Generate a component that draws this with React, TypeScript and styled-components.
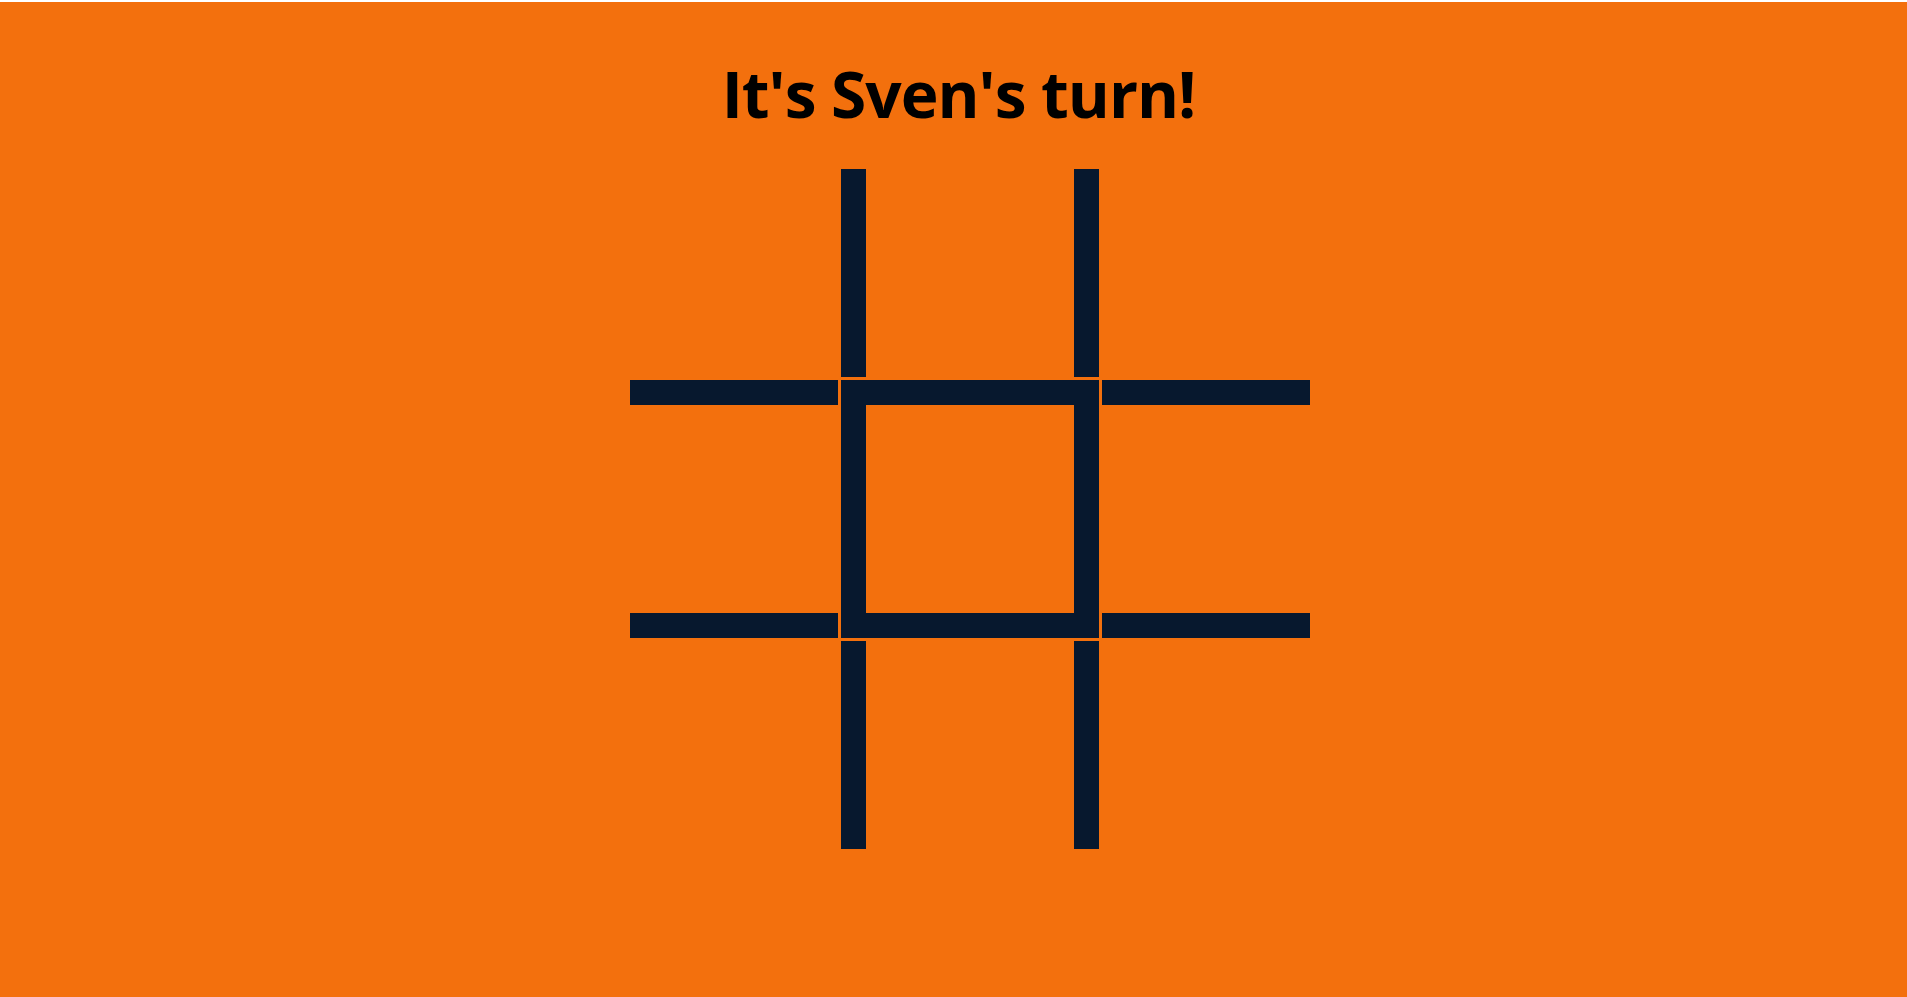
import React from "react";
import styled, { createGlobalStyle } from "styled-components";

const Global = createGlobalStyle`
  html, body { margin: 0; padding: 0; background: #ffffff; }
  body { font-family: "Open Sans", sans-serif; }
`;

const Page = styled.main`
  margin-top: 2px;
  min-height: 995px;
  box-sizing: border-box;
  background: #f3700d;
  display: flex;
  flex-direction: column;
  align-items: center;
  padding-top: 52px;
`;

const Title = styled.h1`
  margin: 0;
  font-family: "Open Sans", sans-serif;
  font-weight: 700;
  font-size: 64px;
  line-height: 80px;
  letter-spacing: -1px;
  color: #000000;
  padding-left: 10px;
`;

const Board = styled.div`
  margin-top: 35px;
  margin-left: 33px;
  display: grid;
  grid-template-columns: repeat(3, auto);
  gap: 3px;
`;

const BAR = "25px solid #07182e";

const Cell = styled.div<{ $t?: boolean; $r?: boolean; $b?: boolean; $l?: boolean }>`
  width: 208px;
  height: 208px;
  border-top: ${(p) => (p.$t ? BAR : "none")};
  border-right: ${(p) => (p.$r ? BAR : "none")};
  border-bottom: ${(p) => (p.$b ? BAR : "none")};
  border-left: ${(p) => (p.$l ? BAR : "none")};
  box-sizing: content-box;
`;

const cells: { t?: boolean; r?: boolean; b?: boolean; l?: boolean }[] = [
  {},
  { l: true, r: true },
  {},
  { t: true, b: true },
  { t: true, r: true, b: true, l: true },
  { t: true, b: true },
  {},
  { l: true, r: true },
  {},
];

export default function App() {
  return (
    <>
      <Global />
      <Page>
        <Title>It's Sven's turn!</Title>
        <Board>
          {cells.map((c, i) => (
            <Cell key={i} $t={c.t} $r={c.r} $b={c.b} $l={c.l} />
          ))}
        </Board>
      </Page>
    </>
  );
}
